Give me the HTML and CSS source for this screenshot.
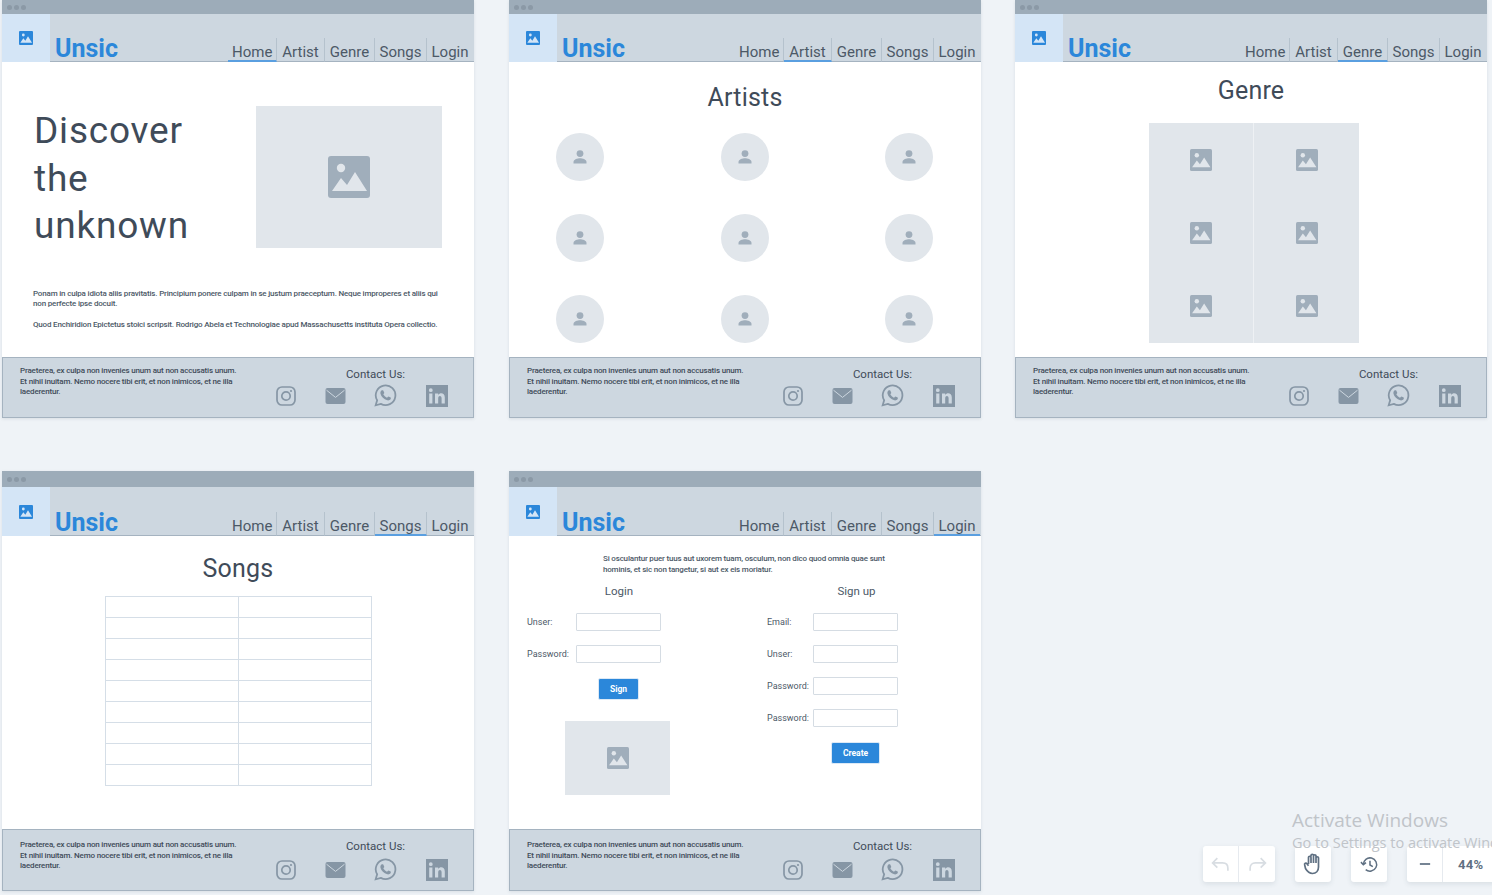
FILE: index.html
```html
<!DOCTYPE html>
<html lang="en">
<head>
  <meta charset="UTF-8" />
  <title>Unsic wireframes</title>
  <link rel="stylesheet" href="styles.css">
</head>
<body>

  <svg class="defs" width="0" height="0">
    <symbol id="i-image" viewBox="0 0 42 42">
      <rect width="42" height="42" rx="3" fill="currentColor"/>
      <circle cx="13" cy="12" r="4.2" class="cut"/>
      <path class="cut" d="M4 35 13 22l6 7 8-13 12 19z"/>
    </symbol>
    <symbol id="i-user" viewBox="0 0 16 16">
      <circle cx="8" cy="4.6" r="3.4" fill="currentColor"/>
      <path fill="currentColor" d="M1.5 14.5v-1.6c0-2.6 4.2-3.7 6.5-3.7s6.5 1.1 6.5 3.7v1.6z"/>
    </symbol>
    <symbol id="i-insta" viewBox="0 0 20 20">
      <rect x="1" y="1" width="18" height="18" rx="5" fill="none" stroke="currentColor" stroke-width="1.7"/>
      <circle cx="10" cy="10" r="4.2" fill="none" stroke="currentColor" stroke-width="1.7"/>
      <circle cx="15" cy="5" r="1.1" fill="currentColor"/>
    </symbol>
    <symbol id="i-mail" viewBox="0 0 20 16">
      <rect width="20" height="16" rx="2" fill="currentColor"/>
      <path d="M1 2.2 10 9.4l9-7.2" fill="none" stroke="#cdd7e0" stroke-width="1"/>
    </symbol>
    <symbol id="i-whats" viewBox="0 0 22 22">
      <path fill="none" stroke="currentColor" stroke-width="1.7" d="M1.6 20.4l1.4-4.8A9.4 9.4 0 1 1 6.5 19z"/>
      <path fill="currentColor" d="M7.8 5.9c.5 0 1 0 1.200.5l.8 1.900c.1.400-.6 1.200-.9 1.600.8 1.500 1.900 2.500 3.500 3.200.5-.4 1.100-1.300 1.500-1.200l2 1c.4.200.3 1-.1 1.700-.6.900-2 1.300-3.100 1-3.300-.9-5.700-3.200-6.500-6.200-.3-1.300.1-3.300 1.400-3.500z"/>
    </symbol>
    <symbol id="i-linked" viewBox="0 0 22 22">
      <path fill="currentColor" fill-rule="evenodd" d="M0 0h22v22H0zM3.200 8.500v10h3.200v-10zM4.800 3.300a1.900 1.900 0 1 0 0 3.800 1.900 1.900 0 0 0 0-3.800zM9 8.500v10h3.200v-5.300c0-3 3.400-3 3.400 0v5.300h3.200v-6c0-5-5-5-6.600-2.600V8.500z"/>
    </symbol>
  </svg>

  <div class="desk">

    <section class="frame">
      <div class="win-bar"><i></i><i></i><i></i></div>
      <header class="head">
        <div class="logo-box"><svg class="logo-icon"><use href="#i-image"/></svg></div>
        <div class="brand">Unsic</div>
        <nav class="nav">
          <a class="active">Home</a><a>Artist</a><a>Genre</a><a>Songs</a><a>Login</a>
        </nav>
      </header>
      <main class="body">
        <div class="hero">
          <h1>Discover the unknown</h1>
          <div class="pic pic-hero"><svg class="pic-icon"><use href="#i-image"/></svg></div>
        </div>
        <div class="copy">
          <p>Ponam in culpa idiota aliis pravitatis. Principium ponere culpam in se justum praeceptum. Neque improperes et aliis qui non perfecte ipse docuit.</p>
          <p>Quod Enchiridion Epictetus stoici scripsit. Rodrigo Abela et Technologiae apud Massachusetts instituta Opera collectio.</p>
        </div>
      </main>
      <footer class="foot">
        <p class="foot-text">Praeterea, ex culpa non invenies unum aut non accusatis unum. Et nihil inuitam. Nemo nocere tibi erit, et non inimicos, et ne illa laederentur.</p>
        <div class="contact">
          <div class="contact-title">Contact Us:</div>
          <div class="socials">
            <svg class="s-insta"><use href="#i-insta"/></svg>
            <svg class="s-mail"><use href="#i-mail"/></svg>
            <svg class="s-whats"><use href="#i-whats"/></svg>
            <svg class="s-linked"><use href="#i-linked"/></svg>
          </div>
        </div>
      </footer>
    </section>

    <section class="frame">
      <div class="win-bar"><i></i><i></i><i></i></div>
      <header class="head">
        <div class="logo-box"><svg class="logo-icon"><use href="#i-image"/></svg></div>
        <div class="brand">Unsic</div>
        <nav class="nav">
          <a>Home</a><a class="active">Artist</a><a>Genre</a><a>Songs</a><a>Login</a>
        </nav>
      </header>
      <main class="body">
        <h2 class="title title-artists">Artists</h2>
        <div class="artists">
          <div class="avatar"><svg><use href="#i-user"/></svg></div>
          <div class="avatar"><svg><use href="#i-user"/></svg></div>
          <div class="avatar"><svg><use href="#i-user"/></svg></div>
          <div class="avatar"><svg><use href="#i-user"/></svg></div>
          <div class="avatar"><svg><use href="#i-user"/></svg></div>
          <div class="avatar"><svg><use href="#i-user"/></svg></div>
          <div class="avatar"><svg><use href="#i-user"/></svg></div>
          <div class="avatar"><svg><use href="#i-user"/></svg></div>
          <div class="avatar"><svg><use href="#i-user"/></svg></div>
        </div>
      </main>
      <footer class="foot">
        <p class="foot-text">Praeterea, ex culpa non invenies unum aut non accusatis unum. Et nihil inuitam. Nemo nocere tibi erit, et non inimicos, et ne illa laederentur.</p>
        <div class="contact">
          <div class="contact-title">Contact Us:</div>
          <div class="socials">
            <svg class="s-insta"><use href="#i-insta"/></svg>
            <svg class="s-mail"><use href="#i-mail"/></svg>
            <svg class="s-whats"><use href="#i-whats"/></svg>
            <svg class="s-linked"><use href="#i-linked"/></svg>
          </div>
        </div>
      </footer>
    </section>

    <section class="frame">
      <div class="win-bar"><i></i><i></i><i></i></div>
      <header class="head">
        <div class="logo-box"><svg class="logo-icon"><use href="#i-image"/></svg></div>
        <div class="brand">Unsic</div>
        <nav class="nav">
          <a>Home</a><a>Artist</a><a class="active">Genre</a><a>Songs</a><a>Login</a>
        </nav>
      </header>
      <main class="body">
        <h2 class="title title-genre">Genre</h2>
        <div class="genres">
          <div class="pic"><svg class="genre-icon"><use href="#i-image"/></svg></div>
          <div class="pic"><svg class="genre-icon"><use href="#i-image"/></svg></div>
          <div class="pic"><svg class="genre-icon"><use href="#i-image"/></svg></div>
          <div class="pic"><svg class="genre-icon"><use href="#i-image"/></svg></div>
          <div class="pic"><svg class="genre-icon"><use href="#i-image"/></svg></div>
          <div class="pic"><svg class="genre-icon"><use href="#i-image"/></svg></div>
        </div>
      </main>
      <footer class="foot">
        <p class="foot-text">Praeterea, ex culpa non invenies unum aut non accusatis unum. Et nihil inuitam. Nemo nocere tibi erit, et non inimicos, et ne illa laederentur.</p>
        <div class="contact">
          <div class="contact-title">Contact Us:</div>
          <div class="socials">
            <svg class="s-insta"><use href="#i-insta"/></svg>
            <svg class="s-mail"><use href="#i-mail"/></svg>
            <svg class="s-whats"><use href="#i-whats"/></svg>
            <svg class="s-linked"><use href="#i-linked"/></svg>
          </div>
        </div>
      </footer>
    </section>

    <section class="frame frame-low">
      <div class="win-bar"><i></i><i></i><i></i></div>
      <header class="head">
        <div class="logo-box"><svg class="logo-icon"><use href="#i-image"/></svg></div>
        <div class="brand">Unsic</div>
        <nav class="nav">
          <a>Home</a><a>Artist</a><a>Genre</a><a class="active">Songs</a><a>Login</a>
        </nav>
      </header>
      <main class="body">
        <h2 class="title title-songs">Songs</h2>
        <table class="songs">
          <tr><td></td><td></td></tr>
          <tr><td></td><td></td></tr>
          <tr><td></td><td></td></tr>
          <tr><td></td><td></td></tr>
          <tr><td></td><td></td></tr>
          <tr><td></td><td></td></tr>
          <tr><td></td><td></td></tr>
          <tr><td></td><td></td></tr>
          <tr><td></td><td></td></tr>
        </table>
      </main>
      <footer class="foot">
        <p class="foot-text">Praeterea, ex culpa non invenies unum aut non accusatis unum. Et nihil inuitam. Nemo nocere tibi erit, et non inimicos, et ne illa laederentur.</p>
        <div class="contact">
          <div class="contact-title">Contact Us:</div>
          <div class="socials">
            <svg class="s-insta"><use href="#i-insta"/></svg>
            <svg class="s-mail"><use href="#i-mail"/></svg>
            <svg class="s-whats"><use href="#i-whats"/></svg>
            <svg class="s-linked"><use href="#i-linked"/></svg>
          </div>
        </div>
      </footer>
    </section>

    <section class="frame frame-low">
      <div class="win-bar"><i></i><i></i><i></i></div>
      <header class="head">
        <div class="logo-box"><svg class="logo-icon"><use href="#i-image"/></svg></div>
        <div class="brand">Unsic</div>
        <nav class="nav">
          <a>Home</a><a>Artist</a><a>Genre</a><a>Songs</a><a class="active">Login</a>
        </nav>
      </header>
      <main class="body">
        <p class="intro">Si osculantur puer tuus aut uxorem tuam, osculum, non dico quod omnia quae sunt hominis, et sic non tangetur, si aut ex eis moriatur.</p>
        <div class="forms">
          <div class="form-col form-login">
            <h3>Login</h3>
            <div class="field"><label>Unser:</label><input type="text" /></div>
            <div class="field"><label>Password:</label><input type="text" /></div>
            <button class="btn btn-sign">Sign</button>
            <div class="pic pic-login"><svg class="genre-icon"><use href="#i-image"/></svg></div>
          </div>
          <div class="form-col form-signup">
            <h3>Sign up</h3>
            <div class="field"><label>Email:</label><input type="text" /></div>
            <div class="field"><label>Unser:</label><input type="text" /></div>
            <div class="field"><label>Password:</label><input type="text" /></div>
            <div class="field"><label>Password:</label><input type="text" /></div>
            <button class="btn btn-create">Create</button>
          </div>
        </div>
      </main>
      <footer class="foot">
        <p class="foot-text">Praeterea, ex culpa non invenies unum aut non accusatis unum. Et nihil inuitam. Nemo nocere tibi erit, et non inimicos, et ne illa laederentur.</p>
        <div class="contact">
          <div class="contact-title">Contact Us:</div>
          <div class="socials">
            <svg class="s-insta"><use href="#i-insta"/></svg>
            <svg class="s-mail"><use href="#i-mail"/></svg>
            <svg class="s-whats"><use href="#i-whats"/></svg>
            <svg class="s-linked"><use href="#i-linked"/></svg>
          </div>
        </div>
      </footer>
    </section>

  </div>

  <!-- Canvas tools and Windows watermark float over the page -->
  <div class="tools">
    <div class="tool-group tool-undo">
      <button class="tool tool-off"><svg viewBox="0 0 18 14"><path d="M6 1 1.500 5.500 6 10M2 5.500h9c3 0 5 2 5 5V13"/></svg></button>
      <button class="tool tool-off"><svg viewBox="0 0 18 14"><path d="M12 1l4.500 4.500L12 10M16 5.500H7c-3 0-5 2-5 5V13"/></svg></button>
    </div>
    <div class="tool-group tool-hand">
      <button class="tool"><svg viewBox="0 0 20 22"><path d="M5.500 11V4.500a1.200 1.200 0 0 1 2.500 0V10m0-6.500V2.500a1.200 1.200 0 0 1 2.500 0V10m0-7a1.200 1.200 0 0 1 2.500 0v7m0-5a1.200 1.200 0 0 1 2.500 0V14c0 4-2.500 6.500-6 6.500-4 0-5.500-2.500-7-5L1.700 12c-.7-1.500 1.300-2.500 2.300-1.200l1.500 2"/></svg></button>
    </div>
    <div class="tool-group tool-history">
      <button class="tool"><svg viewBox="0 0 20 20"><path d="M3.500 10a7 7 0 1 1 2.500 5.400M1 7.500l2.500 2.800L6.300 8M10.500 6v4.500l3 1.700"/></svg></button>
    </div>
    <div class="tool-group tool-zoom">
      <button class="tool"><svg viewBox="0 0 14 14"><path d="M1 7h12"/></svg></button>
      <span class="zoom-value">44%</span>
    </div>
  </div>

  <div class="watermark">
    <div class="wm-big">Activate Windows</div>
    <div class="wm-small">Go to Settings to activate Windows.</div>
  </div>

</body>
</html>
```

FILE: styles.css
```css
/* Estilos gerais */
html, body {
  height: 100%;
}

body {
  margin: 0;
  background-color: #eff3f7;
  font-family: Roboto, "Liberation Sans", sans-serif;
  color: #3f4b59;
  overflow: hidden;
}

.defs {
  display: block;
  height: 0;
}

/* Artboards */
.desk {
  display: grid;
  grid-template-columns: 507px 506px 472px;
  grid-template-rows: 418px 420px;
  row-gap: 53px;
  padding-left: 2px;
}

.frame {
  width: 472px;
  display: flex;
  flex-direction: column;
  background: #fff;
  box-shadow: 0 1px 3px rgba(60, 80, 100, 0.12);
}

.win-bar {
  height: 14px;
  flex: none;
  display: flex;
  align-items: center;
  gap: 2px;
  padding-left: 5px;
  background: #9dacb9;
}

.win-bar i {
  width: 5px;
  height: 5px;
  border-radius: 50%;
  background: #8b99a6;
}

.frame-low .win-bar {
  height: 16px;
}

/* Cabecalho */
.head {
  height: 48px;
  flex: none;
  display: flex;
  align-items: stretch;
  background: #cdd7e0;
  box-shadow: inset 0 -1px 0 #a5b3c0;
}

.frame-low .head {
  height: 49px;
}

.logo-box {
  width: 48px;
  display: flex;
  align-items: center;
  justify-content: center;
  background: #d4e5f6;
  --cut: #d4e5f6;
}

.logo-icon {
  width: 14px;
  height: 14px;
  color: #2b87da;
}

.brand {
  align-self: flex-end;
  padding-left: 5px;
  margin-bottom: -2px;
  font-size: 25px;
  line-height: 30px;
  font-weight: 700;
  color: #2b87da;
}

.nav {
  margin-left: auto;
  margin-right: 1px;
  display: flex;
  align-self: flex-end;
}

.nav a {
  height: 24px;
  box-sizing: border-box;
  padding: 5px 4px 0;
  font-size: 15px;
  line-height: 19px;
  color: #4c5967;
  border-right: 1px solid #b5c2cd;
  border-bottom: 1px solid transparent;
  text-align: center;
}

.nav a:first-child {
  width: 49px;
}

.nav a:nth-child(2) {
  width: 48px;
}

.nav a:nth-child(3) {
  width: 50px;
}

.nav a:nth-child(4) {
  width: 52px;
}

.nav a:last-child {
  width: 46px;
  border-right: none;
}

.nav a.active {
  border-bottom: 2px solid #5a9fe0;
}

/* Conteudo */
.body {
  flex: 1;
  min-height: 0;
}

.pic {
  display: flex;
  align-items: center;
  justify-content: center;
  background: #e1e6eb;
  color: #a0aebb;
  --cut: #e1e6eb;
}

.cut {
  fill: var(--cut, #e1e6eb);
}

.title {
  margin: 0;
  text-align: center;
  font-weight: 400;
  font-size: 25px;
  line-height: 30px;
  letter-spacing: 0.2px;
  color: #3f4b59;
}

.title-artists {
  padding-top: 21px;
}

.title-genre {
  padding-top: 14px;
}

.title-songs {
  padding-top: 18px;
}

/* Discover */
.hero {
  display: flex;
  justify-content: space-between;
  padding: 44px 32px 0 32px;
}

.hero h1 {
  margin: 0;
  width: 180px;
  padding-top: 1px;
  font-size: 37px;
  line-height: 47.500px;
  font-weight: 400;
  letter-spacing: 0.800px;
  color: #3f4b59;
}

.pic-hero {
  width: 186px;
  height: 142px;
}

.pic-icon {
  width: 42px;
  height: 42px;
}

.copy {
  padding: 39px 32px 0 31px;
  font-size: 8px;
  line-height: 10.500px;
  letter-spacing: -0.180px;
  font-weight: 500;
  color: #4c5967;
}

.copy p {
  margin: 0 0 10px;
}

/* Artists */
.artists {
  display: grid;
  grid-template-columns: repeat(3, 48px);
  justify-content: space-between;
  row-gap: 33px;
  padding: 20px 48px 0 47px;
}

.avatar {
  width: 48px;
  height: 48px;
  border-radius: 50%;
  display: flex;
  align-items: center;
  justify-content: center;
  background: #e1e6eb;
  color: #a0aebb;
}

.avatar svg {
  width: 16px;
  height: 16px;
}

/* Genre */
.genres {
  width: 210px;
  margin: 17px 0 0 134px;
  display: grid;
  grid-template-columns: 105px 105px;
  grid-auto-rows: 73.300px;
}

.genres .pic:nth-child(odd) {
  border-right: 1px solid #eef1f4;
}

.genre-icon {
  width: 22px;
  height: 22px;
}

/* Songs */
.songs {
  width: 267px;
  margin: 12px 0 0 103px;
  border-collapse: collapse;
  table-layout: fixed;
}

.songs td {
  height: 20px;
  padding: 0;
  border: 1px solid #d5dee7;
}

.songs td:first-child {
  width: 132px;
}

/* Login */
.intro {
  margin: 0;
  padding: 18px 0 0 94px;
  width: 290px;
  font-size: 8px;
  line-height: 10.500px;
  letter-spacing: -0.180px;
  font-weight: 500;
  color: #4c5967;
}

.forms {
  display: flex;
}

.form-col h3 {
  margin: 0;
  padding-top: 8px;
  height: 28px;
  box-sizing: border-box;
  font-size: 11.500px;
  line-height: 17px;
  font-weight: 400;
  text-align: center;
  color: #4c5967;
}

.form-login {
  width: 238px;
  padding-left: 18px;
  box-sizing: border-box;
}

.form-login h3 {
  width: 184px;
}

.form-signup {
  padding-left: 20px;
}

.form-signup h3 {
  padding-left: 48px;
}

.field {
  display: flex;
  align-items: center;
  height: 18px;
  margin: 10px 0 14px;
}

.field label {
  width: 49px;
  font-size: 9px;
  color: #4c5967;
}

.form-signup .field label {
  width: 46px;
}

.field input {
  width: 85px;
  height: 18px;
  box-sizing: border-box;
  margin: 0;
  padding: 0;
  background: #fff;
  border: 1px solid #d5dce3;
  border-radius: 1px;
}

.btn {
  display: block;
  height: 22px;
  padding: 0;
  border: 1px solid #dce9f6;
  border-radius: 2px;
  background: #2b87da;
  color: #fff;
  font-family: inherit;
  font-size: 8.500px;
  font-weight: 700;
}

.btn-sign {
  width: 41px;
  margin: 15px 0 0 71px;
}

.pic-login {
  width: 105px;
  height: 74px;
  margin: 21px 0 0 38px;
}

.btn-create {
  width: 49px;
  margin: 15px 0 0 64px;
}

/* Rodape */
.foot {
  height: 61px;
  box-sizing: border-box;
  flex: none;
  display: flex;
  justify-content: space-between;
  padding: 8px 0 0 17px;
  background: #cdd7e0;
  border: 1px solid #a5b3c0;
}

.frame-low .foot {
  height: 62px;
}

.frame-low .foot-text {
  padding-top: 2px;
}

.frame-low .socials {
  margin-top: 2px;
}

.foot-text {
  margin: 0;
  width: 222px;
  font-size: 8px;
  line-height: 10.500px;
  letter-spacing: -0.180px;
  font-weight: 500;
  color: #3f4b59;
}

.contact {
  width: 197px;
}

.contact-title {
  padding-top: 1px;
  padding-left: 10px;
  margin-left: -8px;
  text-align: center;
  font-size: 11.500px;
  line-height: 15px;
  color: #3f4b59;
}

.socials {
  display: flex;
  align-items: center;
  height: 27px;
  color: #8696a5;
}

.s-insta {
  width: 20px;
  height: 20px;
}

.s-mail {
  width: 21px;
  height: 16px;
  margin-left: 29px;
}

.s-whats {
  width: 23px;
  height: 23px;
  margin-left: 28px;
}

.s-linked {
  width: 22px;
  height: 22px;
  margin-left: 29px;
}

/* Marca d'agua e ferramentas */
.watermark {
  position: absolute;
  left: 1292px;
  top: 808px;
  white-space: nowrap;
  font-family: "Open Sans", sans-serif;
  color: #c0c4c9;
}

.wm-big {
  font-size: 19px;
  line-height: 24px;
}

.wm-small {
  font-size: 14.500px;
  line-height: 22px;
}

.tools {
  position: absolute;
  left: 1203px;
  top: 846px;
  display: flex;
  gap: 20px;
}

.tool-group {
  display: flex;
  align-items: center;
  height: 36px;
  background: #fff;
  border-radius: 3px;
  box-shadow: 0 2px 5px rgba(60, 80, 100, 0.12);
}

.tool {
  width: 36px;
  height: 36px;
  padding: 0;
  display: flex;
  align-items: center;
  justify-content: center;
  background: none;
  border: none;
  border-right: 1px solid #e6eaef;
  color: #5f7082;
}

.tool-hand .tool, .tool-history .tool, .tool-undo .tool:last-child {
  border-right: none;
}

.tool svg {
  width: 19px;
  height: 19px;
  fill: none;
  stroke: currentColor;
  stroke-width: 1.600;
}

.tool-hand .tool svg {
  width: 22px;
  height: 22px;
  stroke-width: 1.700;
}

.tool-off {
  color: #d8dde2;
}

.tool-zoom {
  width: 90px;
}

.tool-zoom .tool svg {
  width: 12px;
  height: 12px;
  stroke-width: 2;
}

.zoom-value {
  padding-left: 15px;
  font-size: 13px;
  font-weight: 700;
  letter-spacing: 0.300px;
  color: #5f7082;
}
```
